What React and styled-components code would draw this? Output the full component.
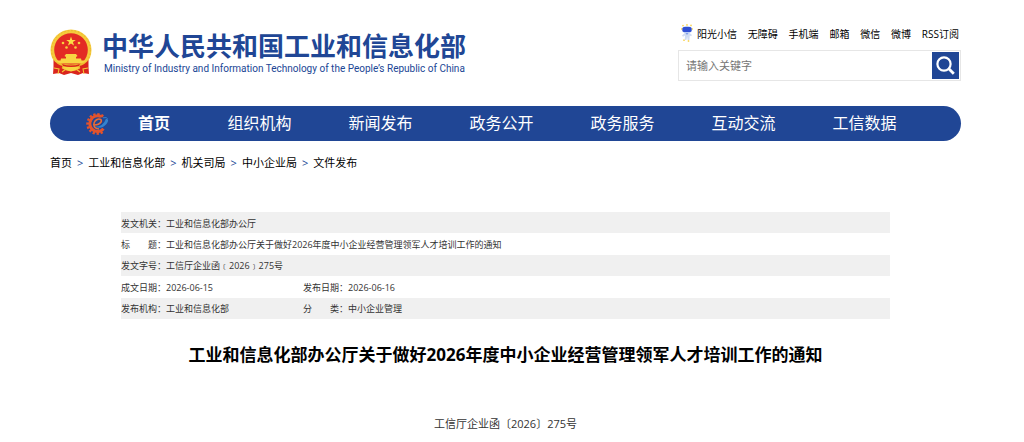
import React, { useState } from 'react';
import styled, { createGlobalStyle } from 'styled-components';

const GlobalStyle = createGlobalStyle`
  * {
    box-sizing: border-box;
  }
  body {
    margin: 0;
    background: #fff;
    color: #000;
    font-family: 'Open Sans', 'Noto Sans CJK SC', sans-serif;
  }
  a {
    color: inherit;
    text-decoration: none;
  }
`;

const Page = styled.div`
  padding: 24px 63px 0 50px;
`;

const Header = styled.header`
  display: flex;
  justify-content: space-between;
  height: 82px;
`;

const Logo = styled.a`
  display: flex;
  align-items: flex-start;
  gap: 10px;
  padding-top: 5px;
  color: #204695;
`;

const LogoText = styled.span`
  display: flex;
  flex-direction: column;
  white-space: nowrap;
`;

const LogoName = styled.span`
  font-size: 26px;
  line-height: 34px;
  font-weight: bold;
`;

const LogoEnglish = styled.span`
  padding-left: 2px;
  font-family: Roboto, sans-serif;
  font-size: 10px;
  line-height: 12px;
`;

const Tools = styled.div`
  width: 283px;
`;

const QuickLinks = styled.nav`
  display: flex;
  align-items: center;
  justify-content: space-between;
  height: 18px;
  margin-bottom: 8px;
  padding: 0 2px 0 3px;
  font-size: 10px;
  white-space: nowrap;
`;

const MascotLink = styled.a`
  display: flex;
  align-items: center;
  gap: 4px;
`;

const Search = styled.form`
  display: flex;
  align-items: center;
  height: 31px;
  padding-right: 1px;
  border: 1px solid #e6e6e6;
`;

const SearchInput = styled.input`
  flex: 1;
  min-width: 0;
  padding: 0 7px;
  border: none;
  outline: none;
  background: none;
  font-family: inherit;
  font-size: 11px;

  &::placeholder {
    color: #757575;
  }
`;

const SearchButton = styled.button`
  display: flex;
  align-items: center;
  justify-content: center;
  width: 27px;
  height: 27px;
  padding: 0;
  border: none;
  background: #204695;
  cursor: pointer;
`;

const NavBar = styled.nav`
  display: flex;
  align-items: center;
  height: 35px;
  padding: 0 36px 0 35px;
  border-radius: 18px;
  background: #204695;
`;

const NavLink = styled.a`
  flex: ${(props) => (props.$home ? 90 : 121)} 0 0;
  font-size: 16px;
  line-height: 35px;
  font-weight: ${(props) => (props.$home ? 'bold' : 'normal')};
  color: #fff;
  text-align: center;
  white-space: nowrap;
`;

const Breadcrumb = styled.nav`
  display: flex;
  gap: 5px;
  padding: 12px 0;
  font-size: 11px;
  line-height: 20px;
`;

const Separator = styled.span`
  color: #204695;
`;

const Article = styled.main`
  padding: 0 71px;
`;

const InfoTable = styled.table`
  width: 100%;
  height: 107px;
  margin-top: 27px;
  border-collapse: collapse;
  table-layout: fixed;
  font-size: 9px;
  line-height: 14px;
  color: #333;

  tr:nth-child(odd) {
    background: #f0f0f0;
  }
  th,
  td {
    padding: 2px 0 0;
    font-weight: normal;
    text-align: left;
    white-space: nowrap;
  }
`;

const LabelColumn = styled.col`
  width: 45px;
`;

const ValueColumn = styled.col`
  width: 137px;
`;

const Title = styled.h1`
  margin: 23px 0 0;
  font-size: 17px;
  line-height: 26px;
  font-weight: bold;
  text-align: center;
  white-space: nowrap;
`;

const DocumentNumber = styled.p`
  margin: 46px 0 0;
  font-size: 11px;
  line-height: 20px;
  color: #333;
  text-align: center;
`;

function Emblem() {
  return (
    <svg width="42" height="47" viewBox="0 0 42 47" aria-hidden="true">
      <path d="M5 32l-2 13 6-1 5 2 7-2 7 2 5-2 6 1-2-13z" fill="#da251d" />
      <circle cx="21" cy="21" r="20.5" fill="#f5cb3c" />
      <circle cx="21" cy="21" r="19.4" fill="none" stroke="#e9b52c" strokeWidth="1" strokeDasharray="1.5 2" />
      <circle cx="21" cy="21" r="16.8" fill="#e32b24" />
      <path d="M21 7.5l1.2 3.4h3.6l-2.9 2.1 1.1 3.5-3-2.1-3 2.1 1.1-3.5-2.9-2.1h3.6z" fill="#fbdf45" />
      <g fill="#f8d13d">
        <circle cx="13" cy="14" r="1.3" />
        <circle cx="29" cy="14" r="1.3" />
        <circle cx="16.5" cy="18.5" r="1.3" />
        <circle cx="25.5" cy="18.5" r="1.3" />
      </g>
      <path d="M14.5 27l1.5-2h10l1.5 2-1.5 1v1.5h5l.5 2h3v3H7.5v-3h3l.5-2h5V28z" fill="#f8d542" />
      <path d="M6 33q15 5 30 0v3q-15 4-30 0z" fill="#f0bb2d" />
      <path d="M3.5 31q4 5 9 6l-2 5-4-1-3 3zM38.5 31q-4 5-9 6l2 5 4-1 3 3z" fill="#da251d" />
      <path d="M12 35q9 3 18 0l-1 2q-8 2-16 0z" fill="#da251d" />
      <path d="M14 38h14l-1 3-6 1.5-6-1.5z" fill="#f8d542" />
      <path d="M4 39l5 1-1 5M38 39l-5 1 1 5M12 43l4-3M30 43l-4-3" fill="none" stroke="#f5c637" strokeWidth="1.1" />
    </svg>
  );
}

function Mascot() {
  return (
    <svg width="12" height="18" viewBox="0 0 12 18" aria-hidden="true">
      <g fill="#f9d65c">
        <circle cx="6" cy=".9" r=".9" />
        <circle cx="2" cy="1.6" r=".9" />
        <circle cx="10" cy="1.4" r=".9" />
        <circle cx=".9" cy="5" r=".9" />
        <circle cx="11.1" cy="5" r=".9" />
        <circle cx="3" cy="16.2" r=".9" />
        <circle cx="7.5" cy="17" r=".9" />
      </g>
      <ellipse cx="6" cy="5.8" rx="4.8" ry="3.9" fill="#b9cdf5" />
      <rect x="1.4" y="3" width="9.2" height="5" rx="1.6" fill="#2f4fd4" />
      <path d="M3.8 9h4.7l2.5 2-1 1.2-1.2-.7L8.4 16H6.6L6.2 13l-.8 3H3.7l.3-4.5L2 12.8 1 11.5z" fill="#cfdcf3" />
      <path d="M4.5 9h3l-1.5 2z" fill="#7f9ee6" />
    </svg>
  );
}

function SearchIcon() {
  return (
    <svg width="19" height="19" viewBox="0 0 19 19" fill="none" stroke="#fff" strokeWidth="2.2" aria-hidden="true">
      <circle cx="8" cy="8" r="6.6" />
      <path d="M12.6 12.6l5.2 5.2" strokeWidth="2.8" />
    </svg>
  );
}

function GearLogo() {
  return (
    <svg width="24" height="24" viewBox="0 0 24 24" fill="none" aria-hidden="true">
      <path d="M18 4.6A9.4 9.4 0 1 0 18.8 18.6" stroke="#e4532b" strokeWidth="3" strokeDasharray="2.2 1.7" />
      <path d="M16 4.6A7.8 7.8 0 1 0 18.5 16.8" stroke="#e4532b" strokeWidth="3" />
      <path d="M8.5 13Q14 13.2 16.2 9.8Q17 6.8 13.5 7Q9.3 8 8.8 12.5Q9.2 16.5 14 17" stroke="#ea6b35" strokeWidth="1.6" />
      <path d="M10 14.8Q18 15 21 6.8Q25 7 21.5 12Q17 17.5 10 14.8z" fill="#3384cf" />
      <path d="M18 5.8Q22 4.8 22.8 7" stroke="#3384cf" strokeWidth="1" />
    </svg>
  );
}

const quickLinks = ['无障碍', '手机端', '邮箱', '微信', '微博', 'RSS订阅'];
const navItems = ['首页', '组织机构', '新闻发布', '政务公开', '政务服务', '互动交流', '工信数据'];
const crumbs = ['首页', '工业和信息化部', '机关司局', '中小企业局', '文件发布'];
const info = [
  [['发文机关', '工业和信息化部办公厅']],
  [['标\u3000\u3000题', '工业和信息化部办公厅关于做好2026年度中小企业经营管理领军人才培训工作的通知']],
  [['发文字号', '工信厅企业函﹝2026﹞275号']],
  [['成文日期', '2026-06-15'], ['发布日期', '2026-06-16']],
  [['发布机构', '工业和信息化部'], ['分\u3000\u3000类', '中小企业管理']],
];

export default function App() {
  const [keyword, setKeyword] = useState('');

  return (
    <>
      <GlobalStyle />
      <Page lang="zh-CN">
        <Header>
          <Logo href="#">
            <Emblem />
            <LogoText>
              <LogoName>中华人民共和国工业和信息化部</LogoName>
              <LogoEnglish>Ministry of Industry and Information Technology of the People’s Republic of China</LogoEnglish>
            </LogoText>
          </Logo>
          <Tools>
            <QuickLinks>
              <MascotLink href="#">
                <Mascot />
                阳光小信
              </MascotLink>
              {quickLinks.map((item) => (
                <a href="#" key={item}>{item}</a>
              ))}
            </QuickLinks>
            <Search onSubmit={(e) => e.preventDefault()}>
              <SearchInput
                type="text"
                aria-label="请输入关键字"
                placeholder="请输入关键字"
                value={keyword}
                onChange={(e) => setKeyword(e.target.value)}
              />
              <SearchButton type="submit" aria-label="搜索">
                <SearchIcon />
              </SearchButton>
            </Search>
          </Tools>
        </Header>
        <NavBar>
          <GearLogo />
          {navItems.map((item, i) => (
            <NavLink href="#" key={item} $home={i === 0}>{item}</NavLink>
          ))}
        </NavBar>
        <Breadcrumb>
          {crumbs.map((item, i) => (
            <React.Fragment key={item}>
              {i > 0 && <Separator>&gt;</Separator>}
              <a href="#">{item}</a>
            </React.Fragment>
          ))}
        </Breadcrumb>
        <Article>
          <InfoTable>
            <colgroup>
              <LabelColumn />
              <ValueColumn />
              <LabelColumn />
              <col />
            </colgroup>
            <tbody>
              {info.map((row) => (
                <tr key={row[0][0]}>
                  {row.map(([label, value]) => (
                    <React.Fragment key={label}>
                      <th scope="row">{label}{'\uff1a'}</th>
                      <td colSpan={row.length === 1 ? 3 : undefined}>{value}</td>
                    </React.Fragment>
                  ))}
                </tr>
              ))}
            </tbody>
          </InfoTable>
          <Title>工业和信息化部办公厅关于做好2026年度中小企业经营管理领军人才培训工作的通知</Title>
          <DocumentNumber>工信厅企业函〔2026〕275号</DocumentNumber>
        </Article>
      </Page>
    </>
  );
}
